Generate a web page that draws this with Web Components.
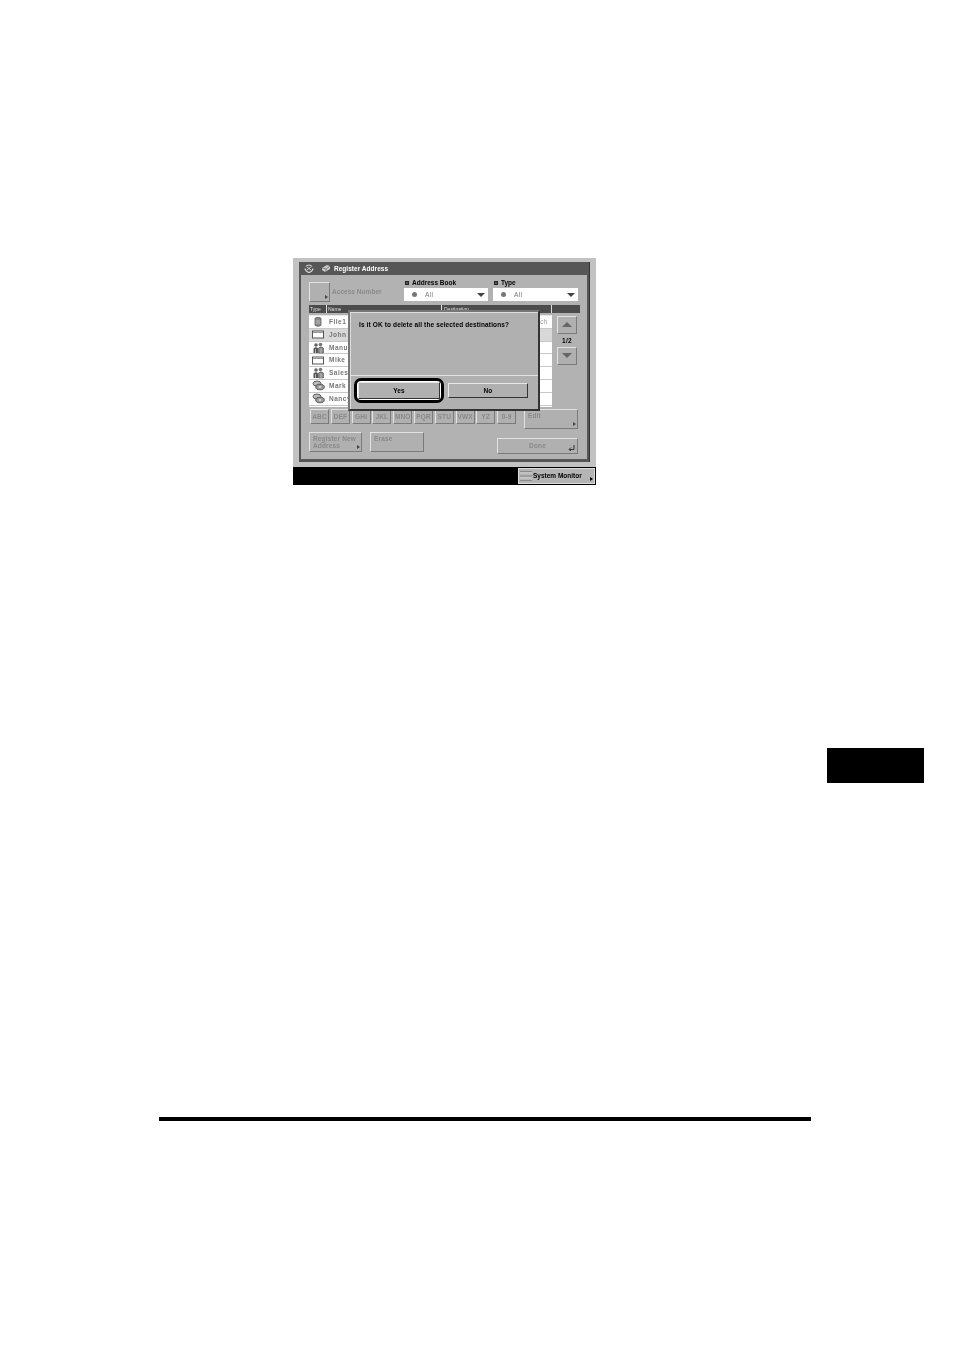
<!DOCTYPE html>
<html><head><meta charset="utf-8"><style>
html,body{margin:0;padding:0;background:#fff}
body{width:954px;height:1350px;overflow:hidden;font-family:"Liberation Sans",sans-serif}
</style></head><body>
<doc-page><ir-screen slot="shot"></ir-screen></doc-page>
<script>
const FONT='"Liberation Sans",sans-serif';
const icons={
 file:'<svg viewBox="0 0 10 11" width="10" height="11"><path d="M2 2.500C2 1 8 1 8 2.500V9C8 10.500 2 10.500 2 9Z" fill="#8a8a8a" stroke="#555" stroke-width=".8"/><path d="M2.500 5h5M2.500 7h5" stroke="#ccc" stroke-width=".7"/></svg>',
 mail:'<svg viewBox="0 0 12 9" width="12" height="9"><rect x=".5" y="1" width="11" height="7" fill="#fff" stroke="#555"/><path d="M1 2.500h10" stroke="#999"/></svg>',
 group:'<svg viewBox="0 0 13 12" width="13" height="12"><circle cx="4" cy="3" r="1.800" fill="#666"/><circle cx="8.500" cy="2.500" r="1.800" fill="#777"/><path d="M1.500 11V6.500Q4 4 6 6.500V11Z" fill="#555"/><path d="M6.500 11V6Q9 3.500 11.500 6V11Z" fill="#888" stroke="#444" stroke-width=".5"/><path d="M3.500 7v4M9 6.500v4.500" stroke="#ddd" stroke-width=".7"/></svg>',
 disc:'<svg viewBox="0 0 13 11" width="13" height="11"><ellipse cx="5" cy="3.500" rx="4" ry="2.500" fill="#bbb" stroke="#444" stroke-width=".8"/><ellipse cx="8" cy="7" rx="4.300" ry="2.800" fill="#999" stroke="#444" stroke-width=".8"/><ellipse cx="8" cy="7" rx="1.500" ry=".8" fill="#eee"/></svg>'
};
class DocPage extends HTMLElement{constructor(){super();this.attachShadow({mode:'open'}).innerHTML=`<style>
:host{display:flex;flex-direction:column;width:954px;height:1350px}
.shot{padding:258px 0 0 293px;height:227px}
.tab{width:97px;height:35px;background:#000;margin:263px 0 0 827px}
.rule{width:652px;height:4px;background:#000;margin:334px 0 0 159px}
</style><div class="shot"><slot name="shot"></slot></div><div class="tab"></div><div class="rule"></div>`}}
customElements.define('doc-page',DocPage);

class IrBtn extends HTMLElement{constructor(){super();this.attachShadow({mode:'open'}).innerHTML=`<style>
:host{display:flex;position:relative;box-sizing:border-box;border:1.5px solid;border-color:#e2e2e2 #7a7a7a #7a7a7a #e2e2e2;background:#b0b0b0;color:#8a8a8a;font:700 6.5px/7px ${FONT};letter-spacing:.15px;padding:0 2px 1px;align-items:center;justify-content:center;overflow:hidden;flex:none}
:host([start]){justify-content:flex-start;align-items:flex-start;padding:2px 0 0 3px}
:host([arrow])::after{content:"";position:absolute;right:1px;bottom:2px;border-left:3px solid #444;border-top:2.5px solid transparent;border-bottom:2.5px solid transparent}
:host([strong]){color:#000;border-color:#e6e6e6 #333 #333 #e6e6e6;padding-bottom:0}
</style><slot></slot>`}}
customElements.define('ir-btn',IrBtn);

class IrSelect extends HTMLElement{constructor(){super();this.attachShadow({mode:'open'}).innerHTML=`<style>
:host{display:flex;flex-direction:column;gap:1px;flex:none}
.l{display:flex;align-items:center;gap:3px;font:700 6.5px/9px ${FONT};letter-spacing:0;color:#000;padding-left:1px}
.l i{width:4px;height:4px;background:#555;box-sizing:border-box;border:1px solid #222}
.b{height:13px;background:#fff;display:flex;align-items:center;padding:0 3px 0 8px;font:400 6.5px/13px ${FONT};letter-spacing:.3px;color:#777}
.d{width:5px;height:5px;border-radius:50%;background:#777;margin-right:8px}
.t{margin-left:auto;border-top:4px solid #444;border-left:4px solid transparent;border-right:4px solid transparent}
</style><div class="l"><i></i><slot></slot></div><div class="b"><span class="d"></span>All<span class="t"></span></div>`}}
customElements.define('ir-select',IrSelect);

class IrRow extends HTMLElement{constructor(){super();const a=this.getAttribute('icon');this.attachShadow({mode:'open'}).innerHTML=`<style>
:host{display:flex;align-items:center;height:12.8px;box-sizing:border-box;border-bottom:1px solid #c8c8c8;background:#fff;color:#777;font:700 6.5px/12px ${FONT};letter-spacing:.5px}
:host([sel]){background:#d8d8d8}
.i{width:18px;display:flex;justify-content:center;flex:none}
.n{margin-left:2px}
.d{margin-left:auto;margin-right:5px;font-weight:400;letter-spacing:0;color:#999}
</style><span class="i">${icons[a]}</span><span class="n"><slot></slot></span><span class="d"><slot name="dest"></slot></span>`}}
customElements.define('ir-row',IrRow);

class IrDialog extends HTMLElement{constructor(){super();this.attachShadow({mode:'open'}).innerHTML=`<style>
:host{display:flex;flex-direction:column;position:absolute;left:55px;top:52px;width:192px;height:101px;box-sizing:border-box;background:#b0b0b0;border:2px solid;border-color:#777 #333 #333 #777;box-shadow:inset 1px 1px 0 #ddd}
.m{height:64px;box-sizing:border-box;padding:8px 0 0 9px;font:700 6.5px/9px ${FONT};letter-spacing:.13px;color:#000;border-bottom:1px solid #e4e4e4}
.a{display:flex;align-items:center;padding:2px 0 0 4px}
.ring{box-sizing:border-box;width:90px;height:25px;border:3px solid #000;border-radius:7px;background:#fff;padding:1px;display:flex;flex:none}
.ring ir-btn{width:100%;height:100%}
.no{margin-left:4px;width:80px;height:15px}
</style><div class="m"><slot></slot></div><div class="a"><div class="ring"><ir-btn strong>Yes</ir-btn></div><ir-btn strong class="no">No</ir-btn></div>`}}
customElements.define('ir-dialog',IrDialog);

class IrScreen extends HTMLElement{constructor(){super();
const alpha=['ABC','DEF','GHI','JKL','MNO','PQR','STU','VWX','YZ','0-9'].map(t=>`<ir-btn class="al">${t}</ir-btn>`).join('');
this.attachShadow({mode:'open'}).innerHTML=`<style>
:host{display:flex;flex-direction:column;position:relative;width:303px;height:227px;background:#c2c2c2;font-family:${FONT};filter:grayscale(1) blur(.35px)}
.frame{margin:4px 0 0 6px;width:291px;height:200px;box-sizing:border-box;background:#565656;border-right:1px solid #333;display:flex;flex-direction:column;padding:0 2px 3px 2px}
.title{height:13px;flex:none;display:flex;align-items:center;color:#fff;font:700 6.5px/13px ${FONT};letter-spacing:.03px}
.title svg{flex:none}
.panel{flex:1;background:#b2b2b2;padding:3px 0 0 8px;display:flex;flex-direction:column}
.top{display:flex;height:24px}
.access{width:21px;height:20px;margin-top:4px}
.alabel{width:72px;margin:10px 0 0 2px;font:700 6.5px/8px ${FONT};letter-spacing:.04px;color:#8a8a8a;flex:none}
.s1{width:84px}.s2{width:85px;margin-left:5px}
.head{margin-top:3px;width:271px;height:8px;display:flex;background:#4c4c4c;color:#ddd;font:400 5px/8px ${FONT}}
.head span{box-sizing:border-box;padding-left:1px;border-right:1px solid #ddd}
.mid{display:flex;margin-top:2px;height:92px}
.list{width:243px;background:#fff;box-sizing:border-box;border-top:1px solid #e8e8e8;height:92px}
.side{margin-left:5px;width:20px;display:flex;flex-direction:column;padding-top:1px;align-items:center}
.side ir-btn{width:20px;height:18px}
.page{height:13px;font:700 6.5px/13px ${FONT};color:#000;letter-spacing:.3px}
.up{width:0;height:0;border-bottom:5px solid #666;border-left:5px solid transparent;border-right:5px solid transparent}
.dn{width:0;height:0;border-top:5px solid #666;border-left:5px solid transparent;border-right:5px solid transparent}
.alpha{display:flex;gap:1.8px;margin-top:2px;height:20px;padding-left:1px}
.al{width:19px;height:15px}
.edit{width:54px;height:20px;margin-left:6px}
.bottom{display:flex;margin-top:3px}
.reg{width:53px;height:20px}
.erase{width:54px;height:20px;margin-left:8px}
.done{width:81px;height:16px;margin:6px 0 0 73px}
.done svg{position:absolute;right:2px;bottom:2px}
.bar{margin-top:5px;height:18px;background:#000;display:flex;justify-content:flex-end;padding:1px 1px 1px 0;box-sizing:border-box}
.sm{width:77px;height:16px;box-sizing:border-box;background:#b4b4b4;border:1px solid #ddd;display:flex;align-items:center;padding-left:1px;color:#000;font:700 6.5px/14px ${FONT};letter-spacing:0;position:relative}
.sm svg{flex:none;margin-right:1px}
.sm i{position:absolute;right:1px;bottom:2px;border-left:3px solid #000;border-top:2.5px solid transparent;border-bottom:2.5px solid transparent}
</style>
<div class="frame">
 <div class="title">
  <svg width="10" height="9" viewBox="0 0 10 9" style="margin:0 7px 0 3px"><path d="M2 2.500C3.500.5 6.500.5 8 2.500M9 4.500C8.500 7 6.500 8 5 8.500 3.500 8 1.500 7 1 4.500" fill="none" stroke="#ddd" stroke-width="1.200"/><path d="M3 3l4 3M7 3l-4 3" stroke="#ddd" stroke-width=".9"/></svg>
  <svg width="10" height="9" viewBox="0 0 10 9" style="margin-right:3px"><path d="M1 4L6 1 9 2 9 5 4 8 1 6Z" fill="#ccc"/><path d="M1 4l4 1 4-3M5 5v3" stroke="#666" stroke-width=".7" fill="none"/></svg>
  <span>Register Address</span>
 </div>
 <div class="panel">
  <div class="top">
   <ir-btn class="access" arrow></ir-btn>
   <div class="alabel">Access Number</div>
   <ir-select class="s1">Address Book</ir-select>
   <ir-select class="s2">Type</ir-select>
  </div>
  <div class="head"><span style="width:18px">Type</span><span style="width:115px">Name</span><span style="width:110px;padding-left:2px">Destination</span></div>
  <div class="mid">
   <div class="list">
    <ir-row icon="file">File1<span slot="dest">ch</span></ir-row>
    <ir-row icon="mail" sel>John</ir-row>
    <ir-row icon="group">Manual</ir-row>
    <ir-row icon="mail">Mike</ir-row>
    <ir-row icon="group">Sales</ir-row>
    <ir-row icon="disc">Mark</ir-row>
    <ir-row icon="disc">Nancy</ir-row>
   </div>
   <div class="side">
    <ir-btn><span class="up"></span></ir-btn>
    <div class="page">1/2</div>
    <ir-btn><span class="dn"></span></ir-btn>
   </div>
  </div>
  <div class="alpha">${alpha}<ir-btn class="edit" start arrow>Edit</ir-btn></div>
  <div class="bottom">
   <ir-btn class="reg" start arrow>Register New<br>Address</ir-btn>
   <ir-btn class="erase" start>Erase</ir-btn>
   <ir-btn class="done">Done<svg width="7" height="7" viewBox="0 0 7 7"><path d="M6 1v4.500H1.500M3 3.500L1 5.500 3 7" fill="none" stroke="#333" stroke-width="1"/></svg></ir-btn>
  </div>
 </div>
</div>
<div class="bar"><div class="sm"><svg width="12" height="12" viewBox="0 0 12 12"><path d="M0 1.500h12M0 6h12M0 10.500h12" stroke="#8a8a8a" fill="none"/><path d="M0 3h12M0 8h12" stroke="#d0d0d0"/></svg>System Monitor<i></i></div></div>
<ir-dialog>Is it OK to delete all the selected destinations?</ir-dialog>`}}
customElements.define('ir-screen',IrScreen);
</script>
</body></html>
